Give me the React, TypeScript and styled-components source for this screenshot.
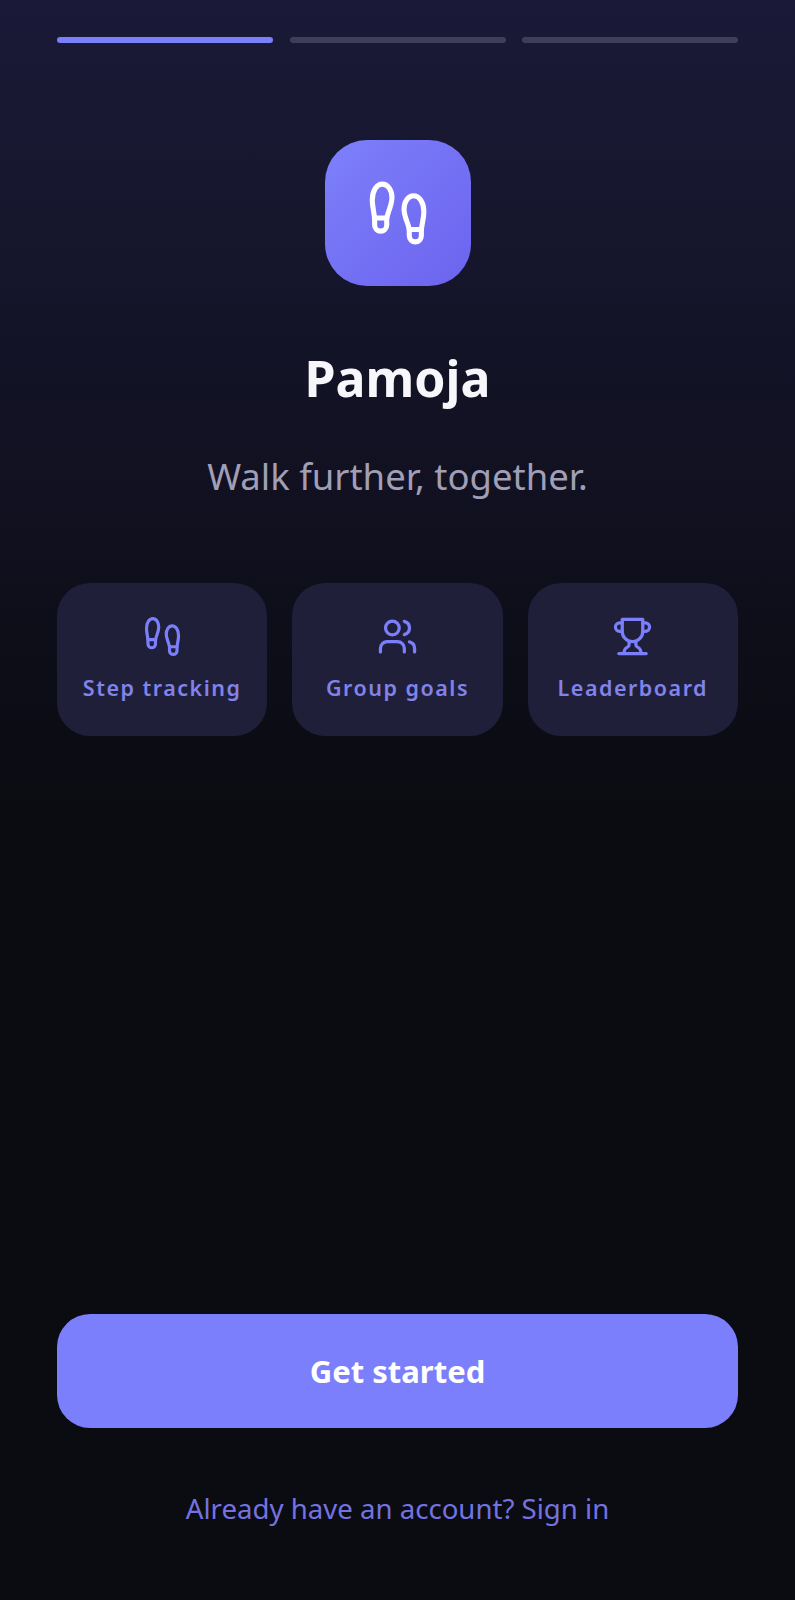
import React from "react";
import styled, { createGlobalStyle } from "styled-components";
import { Users } from "lucide-react";

const Global = createGlobalStyle`
  html, body { margin: 0; padding: 0; background: #0b0b12; }
  * { box-sizing: border-box; }
`;

const Screen = styled.div`
  width: 795px;
  height: 1600px;
  display: flex;
  flex-direction: column;
  padding: 37px 57px 0;
  background: linear-gradient(180deg, #1a1a38 0%, #0b0b12 50%, #0b0b12 100%);
  font-family: "Noto Sans", sans-serif;
`;

const Progress = styled.div`
  display: flex;
  gap: 16.5px;
`;

const Segment = styled.div<{ $active?: boolean }>`
  flex: 1;
  height: 6px;
  border-radius: 3px;
  background: ${(p) => (p.$active ? "#7c7ffb" : "#3f3e58")};
`;

const Hero = styled.div`
  display: flex;
  flex-direction: column;
  align-items: center;
  margin-top: 97px;
`;

const LogoTile = styled.div`
  width: 146px;
  height: 146px;
  border-radius: 42px;
  display: flex;
  align-items: center;
  justify-content: center;
  background: linear-gradient(135deg, #7d80fb 0%, #6c63ee 100%);
  color: #fff;
`;

const Title = styled.h1`
  margin: 58px 0 0;
  font-size: 50px;
  line-height: 68px;
  font-weight: 700;
  color: #f6f6fb;
`;

const Tagline = styled.p`
  margin: 39px 0 0;
  font-size: 36.5px;
  line-height: 50px;
  font-weight: 400;
  color: #a09fb6;
`;

const Features = styled.div`
  display: flex;
  gap: 25px;
  margin-top: 82px;
`;

const FeatureCard = styled.div`
  flex: 1;
  height: 153px;
  border-radius: 33px;
  padding-top: 33px;
  display: flex;
  flex-direction: column;
  align-items: center;
  background: #1f1f3a;
  color: #7c7ffb;
`;

const FeatureLabel = styled.span`
  margin-top: 16px;
  font-size: 21.5px;
  line-height: 30px;
  font-weight: 600;
  letter-spacing: 1.5px;
  color: #8183e8;
`;

const Spacer = styled.div`
  flex: 1;
`;

const PrimaryButton = styled.button`
  height: 114px;
  width: 100%;
  border: none;
  border-radius: 33px;
  background: #7c7ffb;
  color: #fff;
  font-family: inherit;
  font-size: 31px;
  font-weight: 700;
`;

const SignIn = styled.a`
  margin: 60px 0 72px;
  text-align: center;
  font-size: 27.6px;
  line-height: 40px;
  color: #7373e0;
`;

type IconProps = { size: number };

const FootprintsIcon = ({ size }: IconProps) => (
  <svg width={size} height={size} viewBox="0 0 24 24" fill="none" stroke="currentColor" strokeWidth={1.85} strokeLinecap="round" strokeLinejoin="round">
    <path d="M3.5 16.4V14.6C3.5 12.3 2.65 10 2.65 7.3C2.65 4 4.2 1.5 6.3 1.5C8.4 1.5 9.8 3.8 9.8 6.4C9.8 9.6 7.9 12 7.9 14.6V16.4a2.2 2.2 0 0 1-4.4 0Z" />
    <path d="M3.5 13.8H7.9" />
    <path d="M20.5 20.3V18.6C20.5 16.3 21.4 14.2 21.4 11.5C21.4 8.2 19.8 5.75 17.7 5.75C15.6 5.75 14.2 8 14.2 10.6C14.2 13.8 16.1 16 16.1 18.6V20.3a2.2 2.2 0 0 0 4.4 0Z" />
    <path d="M16.1 18H20.5" />
  </svg>
);

const TrophyIcon = ({ size }: IconProps) => (
  <svg width={size} height={size} viewBox="0 0 24 24" fill="none" stroke="currentColor" strokeWidth={1.9} strokeLinecap="round" strokeLinejoin="round">
    <path d="M6 9H4.5a2.5 2.5 0 0 1 0-5H6" />
    <path d="M18 9h1.5a2.5 2.5 0 0 0 0-5H18" />
    <path d="M4 22h16" />
    <path d="M10 14.66V17c0 .55-.47.98-.97 1.21C7.85 18.75 7 20.24 7 22" />
    <path d="M14 14.66V17c0 .55.47.98.97 1.21C16.15 18.75 17 20.24 17 22" />
    <path d="M18 2H6v7a6 6 0 0 0 12 0V2Z" />
  </svg>
);

const UsersIcon = ({ size }: IconProps) => <Users size={size} strokeWidth={1.9} />;

const features = [
  { label: "Step tracking", Icon: FootprintsIcon },
  { label: "Group goals", Icon: UsersIcon },
  { label: "Leaderboard", Icon: TrophyIcon },
];

export default function App() {
  return (
    <>
      <Global />
      <Screen>
        <Progress>
          <Segment $active />
          <Segment />
          <Segment />
        </Progress>
        <Hero>
          <LogoTile>
            <FootprintsIcon size={66} />
          </LogoTile>
          <Title>Pamoja</Title>
          <Tagline>Walk further, together.</Tagline>
        </Hero>
        <Features>
          {features.map(({ label, Icon }) => (
            <FeatureCard key={label}>
              <Icon size={41} />
              <FeatureLabel>{label}</FeatureLabel>
            </FeatureCard>
          ))}
        </Features>
        <Spacer />
        <PrimaryButton>Get started</PrimaryButton>
        <SignIn>Already have an account? Sign in</SignIn>
      </Screen>
    </>
  );
}
